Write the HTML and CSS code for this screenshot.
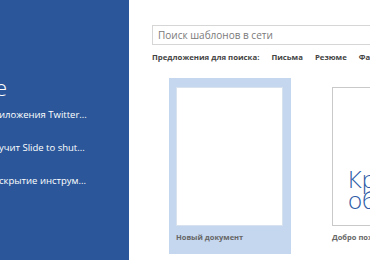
FILE: index.html
```html
<!DOCTYPE html>
<html lang="ru">
<head>
  <meta charset="UTF-8" />
  <title>Word - Создать</title>
  <link rel="stylesheet" href="styles.css">
</head>
<body>

  <!-- ЛЕВАЯ ПАНЕЛЬ -->
  <aside class="sidebar">
    <div class="sidebar-title">e</div>
    <ul class="recent">
      <li>иложения Twitter...</li>
      <li>учит Slide to shut...</li>
      <li>скрытие инструм...</li>
    </ul>
  </aside>

  <!-- ШАБЛОНЫ -->
  <main class="content">
    <div class="search">Поиск шаблонов в сети</div>

    <div class="suggest">
      <span>Предложения для поиска:</span>
      <span>Письма</span>
      <span>Резюме</span>
      <span>Факсы</span>
    </div>

    <div class="templates">
      <div class="tile selected">
        <div class="page"></div>
        <div class="tile-label">Новый документ</div>
      </div>
      <div class="tile">
        <div class="page page-tour">
          <div class="tour-line">Краткий</div>
          <div class="tour-line">обзор</div>
        </div>
        <div class="tile-label">Добро пожаловать в Word</div>
      </div>
    </div>
  </main>

</body>
</html>
```

FILE: styles.css
```css
/* Reset */
* {
  margin: 0; padding: 0; box-sizing: border-box;
}
html, body {
  width: 370px;
  height: 260px;
  overflow: hidden;
  font-family: 'Open Sans', 'Noto Sans', sans-serif;
  background: #fff;
}
body {
  display: flex;
}
/* ЛЕВАЯ ПАНЕЛЬ */
.sidebar {
  width: 129px;
  flex-shrink: 0;
  background: #2b579a;
  color: #fff;
  padding-top: 74px;
  overflow: hidden;
}
.sidebar-title {
  font-size: 22px;
  font-weight: 300;
  line-height: 26px;
  margin-left: -5px;
}
.recent {
  list-style: none;
  margin-top: 8px;
  display: flex;
  flex-direction: column;
  gap: 19px;
}
.recent li {
  font-size: 9.5px;
  line-height: 14px;
  white-space: nowrap;
  margin-left: -1px;
}
/* ОБЛАСТЬ ШАБЛОНОВ */
.content {
  flex: 1;
  min-width: 0;
  padding: 25px 0 0 23px;
  overflow: hidden;
}
.search {
  width: 280px;
  height: 20px;
  border: 1px solid #d6d6d6;
  padding-left: 5px;
  font-size: 10px;
  line-height: 18px;
  color: #7a7a7a;
  white-space: nowrap;
}
.suggest {
  margin-top: 6px;
  display: flex;
  gap: 12px;
  font-size: 7.8px;
  font-weight: 700;
  line-height: 12px;
  color: #444;
  white-space: nowrap;
}
.templates {
  margin-top: 15px;
  margin-left: 17px;
  display: flex;
  gap: 34px;
}
.tile {
  width: 122px;
  flex-shrink: 0;
  padding: 9px 8px 11px 7px;
}
.tile.selected {
  background: #c5d6ef;
}
.page {
  width: 107px;
  height: 139px;
  background: #fff;
  border: 1px solid #d8e1ee;
}
.page-tour {
  border: 1px solid #c9c9c9;
  padding: 80px 0 0 15px;
  overflow: hidden;
}
.tour-line {
  font-size: 24px;
  font-weight: 300;
  line-height: 21px;
  color: #2e5ca6;
  white-space: nowrap;
}
.tile-label {
  margin-top: 5px;
  font-size: 7.5px;
  font-weight: 700;
  line-height: 12px;
  color: #666;
  white-space: nowrap;
}
```
